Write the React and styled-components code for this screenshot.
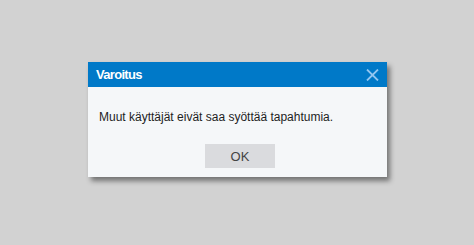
import * as React from "react";
import styled, { createGlobalStyle } from "styled-components";

const GlobalStyle = createGlobalStyle`
  html, body {
    margin: 0;
    padding: 0;
    background: #d2d2d2;
  }
  body {
    font-family: "Liberation Sans", Arial, sans-serif;
  }
`;

const Backdrop = styled.div`
  width: 474px;
  height: 245px;
  display: flex;
  align-items: flex-start;
  padding: 62px 0 0 88px;
  box-sizing: border-box;
  background: #d2d2d2;
`;

const Dialog = styled.div`
  width: 299px;
  height: 115px;
  display: flex;
  flex-direction: column;
  background: #f5f7f9;
  box-shadow: 3px 4px 5px rgba(0, 0, 0, 0.45);
`;

const TitleBar = styled.div`
  height: 25px;
  display: flex;
  align-items: center;
  justify-content: space-between;
  padding: 0 8px 0 8px;
  background: #0079c8;
`;

const Title = styled.span`
  color: #ffffff;
  font-weight: bold;
  font-size: 13px;
  letter-spacing: -0.7px;
`;

const CloseButton = styled.button`
  width: 14px;
  height: 14px;
  padding: 0;
  border: none;
  background: transparent;
  display: flex;
  align-items: center;
  justify-content: center;
  cursor: pointer;
`;

const Body = styled.div`
  flex: 1;
  display: flex;
  flex-direction: column;
  padding: 23px 11px 0 11px;
`;

const Message = styled.p`
  margin: 0;
  color: #1e1e1e;
  font-size: 12px;
  line-height: 15px;
`;

const Actions = styled.div`
  display: flex;
  justify-content: center;
  padding: 19px 0 0 5px;
`;

const OkButton = styled.button`
  width: 70px;
  height: 24px;
  border: none;
  background: #dadbde;
  color: #444;
  font-family: "Liberation Sans", Arial, sans-serif;
  font-size: 13px;
  cursor: pointer;
`;

export default function App() {
  return (
    <>
      <GlobalStyle />
      <Backdrop>
        <Dialog>
          <TitleBar>
            <Title>Varoitus</Title>
            <CloseButton aria-label="Sulje">
              <svg width="13" height="12" viewBox="0 0 13 12">
                <path
                  d="M1 0.5 L12 11.5 M12 0.5 L1 11.5"
                  stroke="#93c6f0"
                  strokeWidth="1.8"
                  fill="none"
                />
              </svg>
            </CloseButton>
          </TitleBar>
          <Body>
            <Message>Muut käyttäjät eivät saa syöttää tapahtumia.</Message>
            <Actions>
              <OkButton>OK</OkButton>
            </Actions>
          </Body>
        </Dialog>
      </Backdrop>
    </>
  );
}
